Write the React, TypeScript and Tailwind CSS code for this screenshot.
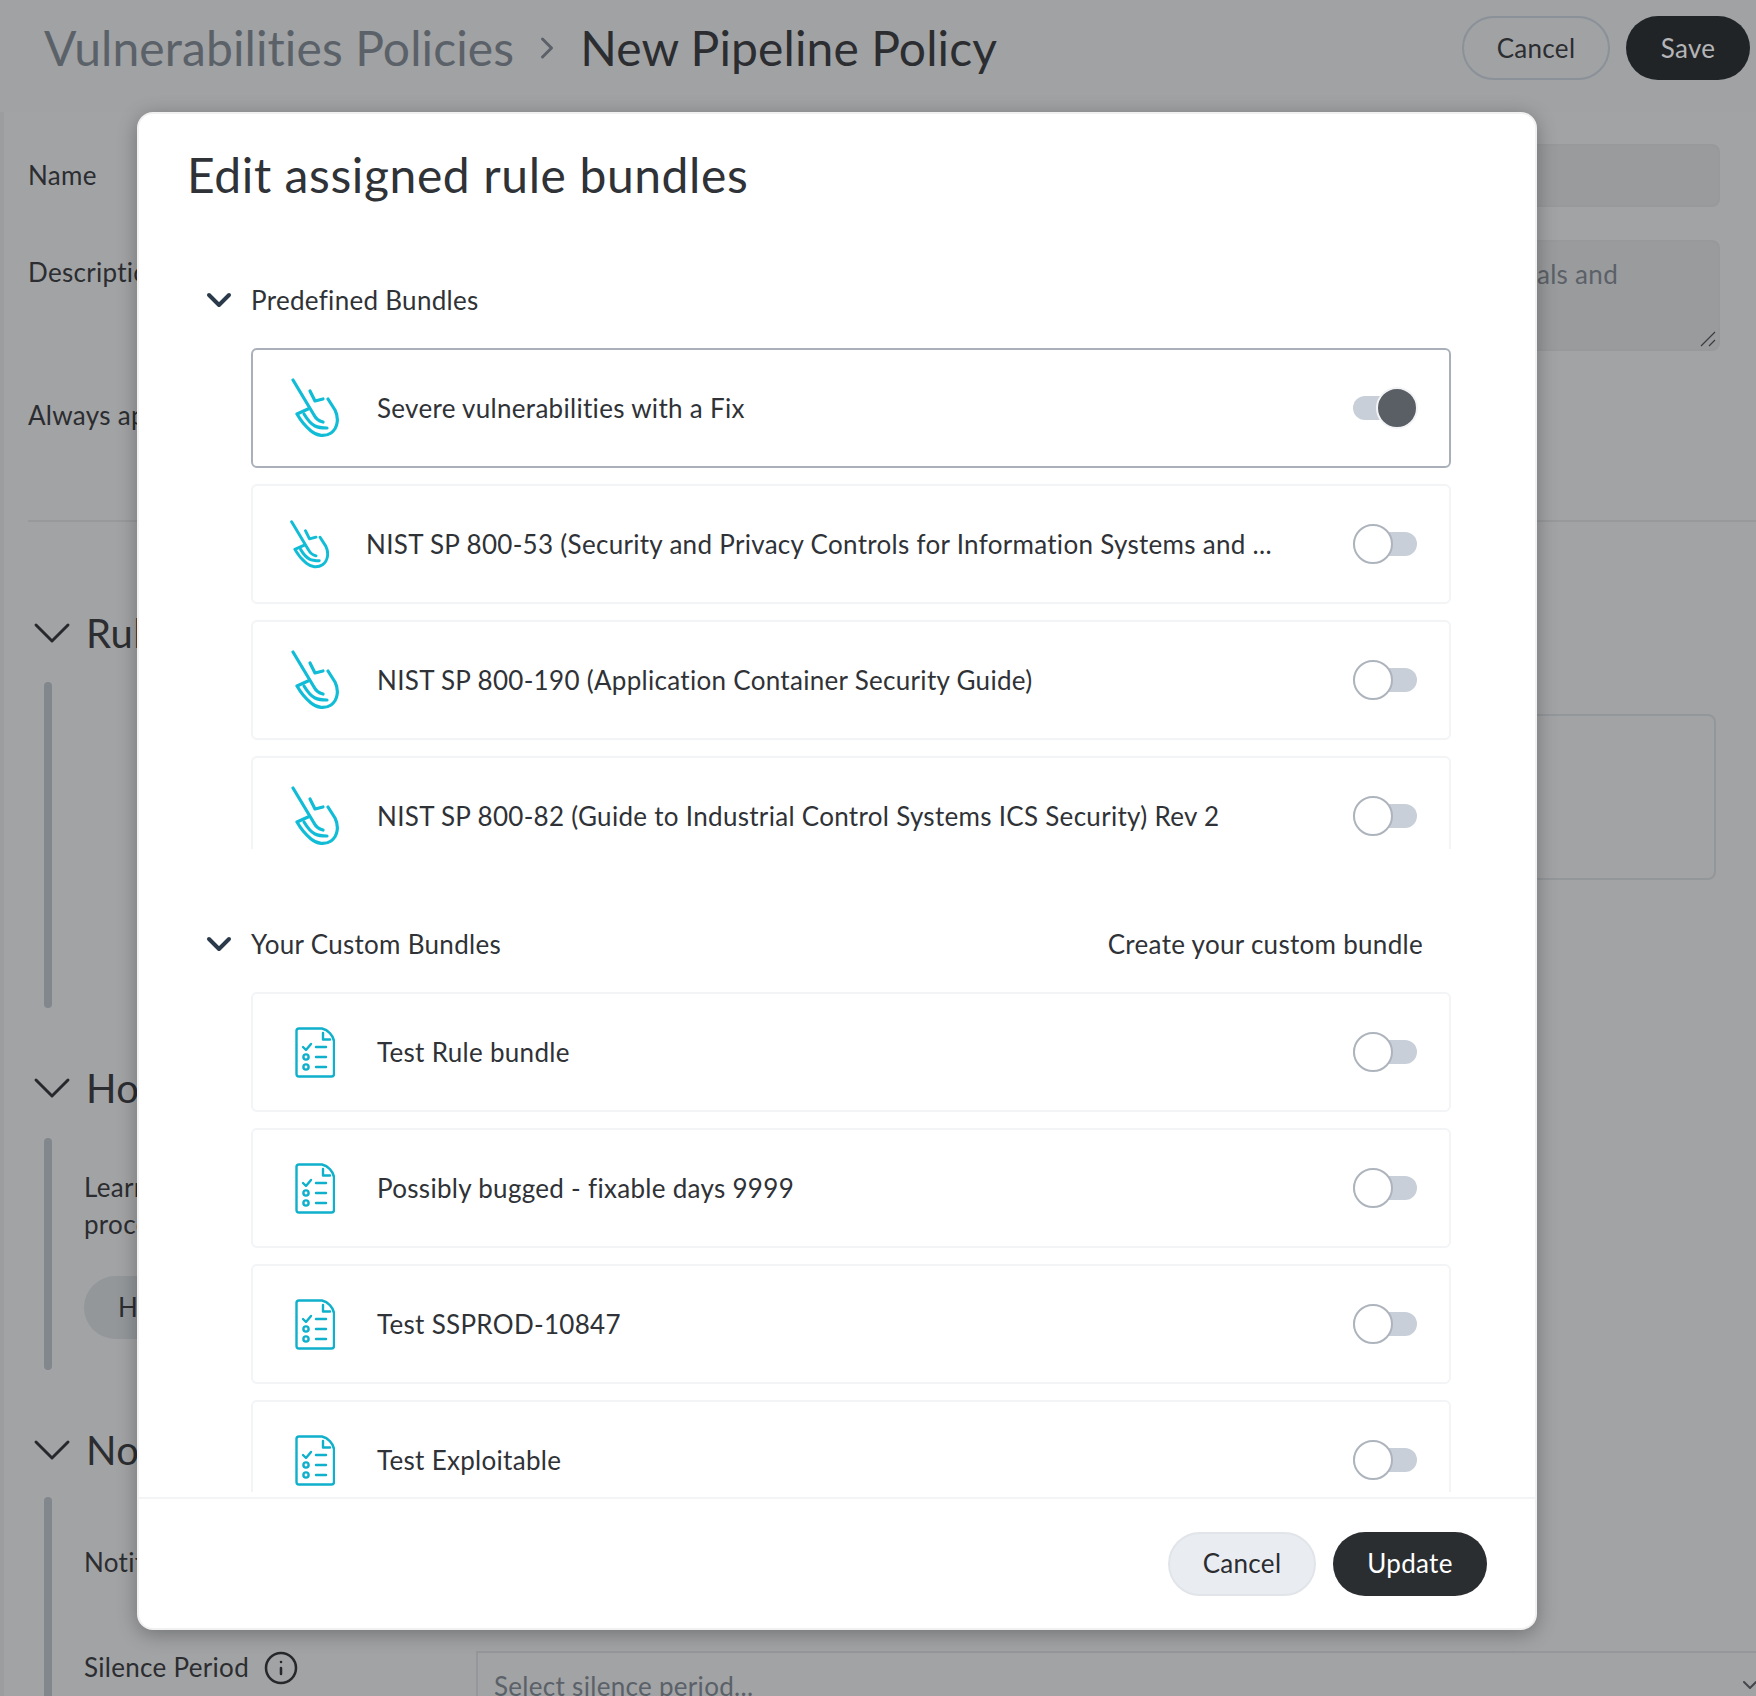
import React from 'react';
import { ChevronDown, ChevronRight, Info } from 'lucide-react';

const predefined = [
  { name: 'Severe vulnerabilities with a Fix', on: true },
  { name: 'NIST SP 800-53 (Security and Privacy Controls for Information Systems and ...', small: true },
  { name: 'NIST SP 800-190 (Application Container Security Guide)' },
  { name: 'NIST SP 800-82 (Guide to Industrial Control Systems ICS Security) Rev 2' },
];

const custom = ['Test Rule bundle', 'Possibly bugged - fixable days 9999', 'Test SSPROD-10847', 'Test Exploitable'];

function HandIcon({ small }: { small?: boolean }) {
  return (
    <svg
      viewBox="0 0 48 60"
      fill="none"
      stroke="#10bcd6"
      strokeWidth={small ? 3.6 : 3.2}
      strokeLinecap="round"
      strokeLinejoin="round"
      className={small ? 'ml-[-1px] h-[49px] w-[39px] shrink-0' : 'h-[60px] w-[48px] shrink-0'}
    >
      <path d="M2 2 L23 37 C25 41 28 43 32 44" />
      <path d="M19 13 L24 23 L32 21" />
      <path d="M37 21 L44 32 C48 40 47 50 40 55 C34 59 26 58 20 53 C14 48 10 43 6 36 L17 31" />
      <path d="M13 36 C16 41 20 46 24 48 C28 50 32 50 36 50" />
    </svg>
  );
}

function DocIcon() {
  return (
    <svg viewBox="0 0 40 51" fill="none" stroke="#0fb0cc" strokeWidth="2.4" strokeLinecap="round" strokeLinejoin="round" className="h-[51px] w-[40px] shrink-0">
      <path d="M4 1.5 H27 C33 3 38 8 39 14 V47 C39 48.5 38 49.5 36.5 49.5 H4 C2.5 49.5 1.5 48.5 1.5 47 V4 C1.5 2.5 2.5 1.5 4 1.5 Z" />
      <path d="M28 6 V12.5 H35" />
      <path d="M8 20 L11 23 L16 17" />
      <path d="M21 20 H31" />
      <circle cx="11" cy="30" r="2.6" />
      <path d="M21 30 H31" />
      <circle cx="11" cy="40" r="2.6" />
      <path d="M21 40 H31" />
    </svg>
  );
}

function Toggle({ on }: { on?: boolean }) {
  return (
    <div className="relative h-[24px] w-[64px] shrink-0 rounded-full bg-[#c8cfd8]">
      {on ? (
        <div className="absolute right-[-1px] top-[-9px] h-[42px] w-[42px] rounded-full border-2 border-[#f3f4f6] bg-[#5a5f66]" />
      ) : (
        <div className="absolute left-0 top-[-8px] h-[40px] w-[40px] rounded-full border-2 border-[#aeb4bd] bg-white" />
      )}
    </div>
  );
}

function BundleRow({ icon, name, on, small }: { icon: React.ReactNode; name: string; on?: boolean; small?: boolean }) {
  return (
    <div
      className={`flex h-[120px] shrink-0 items-center rounded-md border-2 pl-[38px] pr-[32px] ${
        on ? 'border-[#aab0ba]' : 'border-[#f3f4f6]'
      }`}
    >
      <div className={`flex shrink-0 ${small ? 'w-[75px]' : 'w-[86px]'}`}>{icon}</div>
      <span className="flex-1 truncate text-[26px] text-[#2f3236]">{name}</span>
      <Toggle on={on} />
    </div>
  );
}

function SectionHeader({ title, action }: { title: string; action?: string }) {
  return (
    <div className="flex h-[40px] items-center">
      <ChevronDown className="mr-[12px] h-[40px] w-[40px] text-[#2b3a4a]" strokeWidth={2.4} />
      <span className="flex-1 text-[26px] text-[#2f3236]">{title}</span>
      {action && <span className="mr-[28px] text-[26px] text-[#2f3236]">{action}</span>}
    </div>
  );
}

function Modal() {
  return (
    <div className="absolute left-[137px] top-[112px] flex h-[1518px] w-[1400px] flex-col rounded-2xl border-2 border-[#f1f1f2] bg-white shadow-[0_4px_20px_rgba(0,0,0,0.3)]">
      <div className="pl-[48px] pt-[29px]">
        <h2 className="text-[48px] leading-[64px] tracking-[0.6px] text-[#2f3236]">Edit assigned rule bundles</h2>
      </div>
      <div className="mt-[73px] pl-[60px] pr-[84px]">
        <SectionHeader title="Predefined Bundles" />
        <div className="ml-[52px] mt-[28px] flex h-[501px] flex-col gap-[16px] overflow-hidden">
          {predefined.map((b) => (
            <BundleRow key={b.name} name={b.name} on={b.on} small={b.small} icon={<HandIcon small={b.small} />} />
          ))}
        </div>
      </div>
      <div className="mt-[75px] pl-[60px] pr-[84px]">
        <SectionHeader title="Your Custom Bundles" action="Create your custom bundle" />
        <div className="ml-[52px] mt-[28px] flex h-[500px] flex-col gap-[16px] overflow-hidden">
          {custom.map((name) => (
            <BundleRow key={name} name={name} icon={<div className="ml-[4px]"><DocIcon /></div>} />
          ))}
        </div>
      </div>
      <div className="mt-[5px] flex flex-1 items-center justify-end gap-[17px] border-t-2 border-[#f3f4f6] pr-[48px]">
        <button className="h-[64px] w-[148px] rounded-full border-2 border-[#e1e5ea] bg-[#e9ecf1] text-[26px] text-[#2b2d30]">Cancel</button>
        <button className="h-[64px] w-[154px] rounded-full bg-[#2b2e31] text-[26px] text-white">Update</button>
      </div>
    </div>
  );
}

function SectionTitle({ title }: { title: string }) {
  return (
    <div className="flex h-[48px] items-center">
      <ChevronDown className="-my-[8px] ml-[-8px] mr-[2px] h-[64px] w-[64px] text-[#26282b]" strokeWidth={1.1} />
      <span className="text-[40px] leading-[48px] text-[#2b2d30]">{title}</span>
    </div>
  );
}

export default function App() {
  return (
    <div className="relative h-[1696px] w-[1756px] overflow-hidden bg-[#a2a3a5] font-['Lato',sans-serif] tracking-[0.3px] [font-variant-ligatures:none]">
      <header className="flex h-[112px] items-center justify-between bg-[#a1a2a4] pb-[16px] pl-[44px] pr-[6px]">
        <div className="flex items-center text-[48px] tracking-[0.1px]">
          <span className="text-[#5b6168]">Vulnerabilities Policies</span>
          <ChevronRight className="mx-[15px] h-[36px] w-[36px] text-[#5b6168]" strokeWidth={2} />
          <span className="text-[#2b2d30]">New Pipeline Policy</span>
        </div>
        <div className="flex gap-[16px]">
          <button className="h-[64px] w-[148px] rounded-full border-2 border-[#8a9198] text-[26px] text-[#2b2d30]">Cancel</button>
          <button className="h-[64px] w-[124px] rounded-full bg-[#212427] text-[26px] text-[#b4b5b6]">Save</button>
        </div>
      </header>

      <main className="h-[1584px] border-l-4 border-[#9c9d9f] pl-[24px]">
        <div className="flex items-start pt-[32px] text-[26px] text-[#2b2d30]">
          <span className="w-[448px] pt-[12px]">Name</span>
          <div className="mr-[36px] h-[63px] flex-1 rounded-lg border-2 border-[#98999b] bg-[#9a9b9d]" />
        </div>
        <div className="mt-[33px] flex items-start text-[26px] text-[#2b2d30]">
          <span className="w-[448px] pt-[13px]">Description</span>
          <div className="relative mr-[36px] h-[111px] flex-1 rounded-lg border-2 border-[#98999b] bg-[#9a9b9d] pr-[100px] pt-[13px] text-right text-[#5b6168]">
            goals and
            <svg viewBox="0 0 16 16" className="absolute bottom-[2px] right-[2px] h-[16px] w-[16px]" stroke="#3a3c40" strokeWidth="1.2">
              <path d="M1 15 L15 1 M9 15 L15 9" />
            </svg>
          </div>
        </div>
        <div className="mt-[49px] text-[26px] leading-[30px] text-[#2b2d30]">Always apply</div>
        <div className="mt-[90px] border-t-2 border-[#98999b]" />

        <section className="mt-[87px]">
          <SectionTitle title="Rules" />
          <div className="ml-[16px] mt-[25px] flex h-[326px] gap-[32px]">
            <div className="w-[8px] rounded-full bg-[#82878d]" />
            <div className="ml-[300px] mr-[40px] mt-[32px] h-[166px] flex-1 rounded-lg border-2 border-[#94979a]" />
          </div>
        </section>

        <section className="mt-[56px]">
          <SectionTitle title="How" />
          <div className="ml-[16px] mt-[26px] flex h-[232px] gap-[32px]">
            <div className="w-[8px] rounded-full bg-[#82878d]" />
            <div className="pt-[31px] text-[26px] leading-[37px] text-[#2b2d30]">
              <p>Learn how</p>
              <p>process</p>
              <button className="mt-[33px] h-[63px] w-[200px] rounded-full bg-[#93979a] pl-[34px] text-left">How</button>
            </div>
          </div>
        </section>

        <section className="mt-[56px]">
          <SectionTitle title="Notifications" />
          <div className="ml-[16px] mt-[23px] flex h-[300px] gap-[32px]">
            <div className="w-[8px] rounded-full bg-[#82878d]" />
            <div className="flex-1 pt-[46px] text-[26px] text-[#2b2d30]">
              <p>Notify</p>
              <div className="mt-[66px] flex items-start">
                <div className="flex w-[392px] items-center gap-[14px]">
                  <span>Silence Period</span>
                  <Info className="h-[36px] w-[36px] text-[#26282b]" strokeWidth={1.7} />
                </div>
                <div className="-mr-[10px] mt-[3px] flex h-[64px] flex-1 items-start justify-between border-l-2 border-t-2 border-[#96979a] pl-[16px] pt-[14px] text-[#5b6168]">
                  <span>Select silence period...</span>
                  <ChevronDown className="mr-[4px] mt-[6px] h-[24px] w-[24px] text-[#44474b]" />
                </div>
              </div>
            </div>
          </div>
        </section>
      </main>

      <Modal />
    </div>
  );
}
